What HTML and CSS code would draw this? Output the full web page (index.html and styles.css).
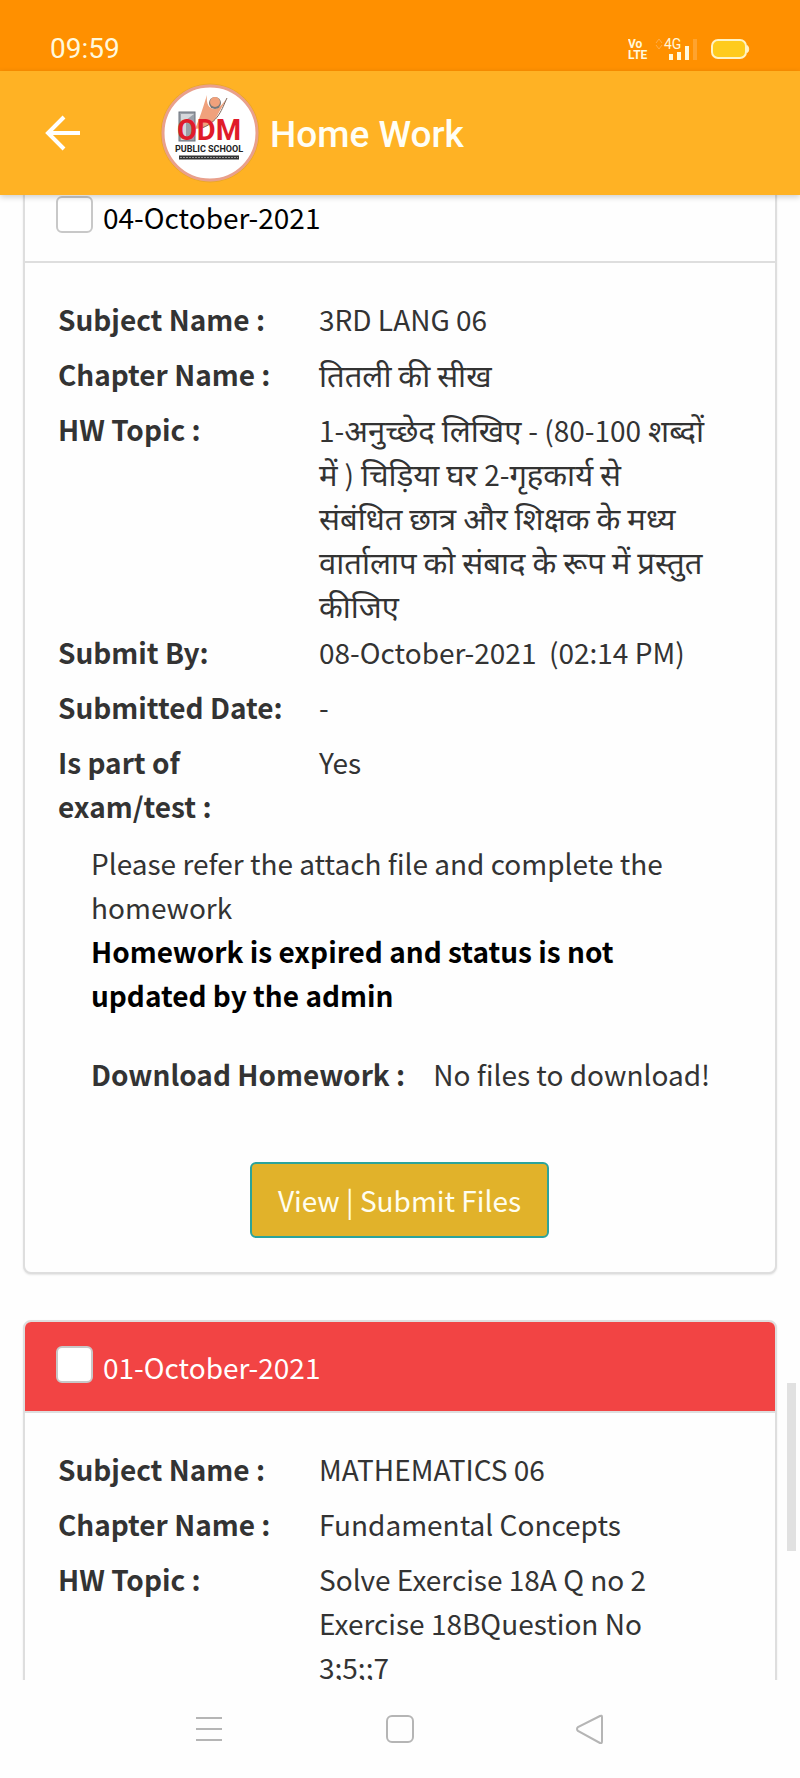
FILE: index.html
```html
<!DOCTYPE html>
<html lang="en">
<head>
<meta charset="utf-8">
<meta name="viewport" content="width=device-width, initial-scale=1">
<title>Home Work</title>
<link rel="stylesheet" href="styles.css">
</head>
<body>
<div class="app">
  <div class="status-bar">
    <span class="clock">09:59</span>
    <svg class="status-icons" width="122" height="24" viewBox="0 0 122 24" aria-hidden="true">
      <text class="volte" x="0" y="11">Vo</text>
      <text class="volte" x="0" y="22">LTE</text>
      <path d="M28 6l3-4 3 4M28 8l3 4 3-4" fill="none" stroke="#ffad4a" stroke-width="1"/>
      <text class="network" x="36" y="12">4G</text>
      <path d="M43 17v6M51 15v8M59 9v14" stroke="#fff8dc" stroke-width="4"/>
      <path d="M67 2v21" stroke="#ffa32e" stroke-width="4"/>
      <rect x="84" y="3" width="34" height="18" rx="6" fill="#ffcb1c" stroke="#fff3c4" stroke-width="2"/>
      <path d="M119 8.500c2 1 2.500 6 0 7z" fill="#fff3c4" stroke="#fff3c4"/>
    </svg>
  </div>

  <header class="app-bar">
    <button class="back" type="button" aria-label="Back">
      <svg width="36" height="36" viewBox="0 0 36 36"><path d="M36 18H4M20 2L4 18l16 16" fill="none" stroke="#fff" stroke-width="4"/></svg>
    </button>
    <svg class="logo" width="100" height="100" viewBox="0 0 100 100" role="img" aria-label="ODM Public School">
      <circle cx="50" cy="50" r="49" fill="none" stroke="#e9a727" stroke-width="1"/>
      <circle cx="50" cy="50" r="47" fill="#fff" stroke="#e9a08c" stroke-width="3"/>
      <rect x="19" y="29" width="16" height="29" fill="#9aa0a8" stroke="#6c737c" stroke-width="1"/>
      <path d="M21 31h13l-8 6v20h-5z" fill="#d4d7db"/>
      <path d="M47 12C44 21 42 28 39 36L35 46c10-1 18-5 22-13 3-6 7-12 10-18-4 6-8 10-12 11-6 0-9-5-8-14z" fill="#f0a17c"/>
      <path d="M67 15c-5 10-8 25-28 31" fill="none" stroke="#7d6558" stroke-width="1"/>
      <circle cx="55" cy="20" r="6" fill="#777"/>
      <circle cx="55" cy="19" r="5" fill="#f0a17c"/>
      <text class="logo-name" x="49" y="57">ODM</text>
      <text class="logo-sub" x="49" y="69">PUBLIC SCHOOL</text>
      <path d="M19 74.500h60" stroke="#333" stroke-width="4"/>
      <path d="M20 74.500h58" stroke="#999" stroke-width="1" stroke-dasharray="2 1"/>
    </svg>
    <h1 class="title">Home Work</h1>
  </header>

  <main class="feed">
    <article class="card card-first">
      <label class="card-head">
        <input class="tick" type="checkbox">
        <span>04-October-2021</span>
      </label>
      <div class="card-body">
        <dl class="facts">
          <div class="fact"><dt>Subject Name :</dt><dd>3RD LANG 06</dd></div>
          <div class="fact"><dt>Chapter Name :</dt><dd lang="hi">तितली की सीख</dd></div>
          <div class="fact fact-topic"><dt>HW Topic :</dt><dd lang="hi"><span class="latin">1-</span>अनुच्छेद लिखिए <span class="latin">- (80-100</span> शब्दों में <span class="latin">)</span> चिड़िया घर <span class="latin">2-</span>गृहकार्य से संबंधित छात्र और शिक्षक के मध्य वार्तालाप को संबाद के रूप में प्रस्तुत कीजिए</dd></div>
          <div class="fact"><dt>Submit By:</dt><dd>08-October-2021&nbsp; (02:14 PM)</dd></div>
          <div class="fact"><dt>Submitted Date:</dt><dd>-</dd></div>
          <div class="fact"><dt>Is part of exam/test :</dt><dd>Yes</dd></div>
        </dl>
        <div class="note">
          <p>Please refer the attach file and complete the homework</p>
          <p class="expired">Homework is expired and status is not updated by the admin</p>
          <p class="download"><strong>Download Homework :</strong><span>No files to download!</span></p>
        </div>
        <div class="actions"><button class="submit" type="button">View | Submit Files</button></div>
      </div>
    </article>

    <article class="card">
      <label class="card-head card-head-late">
        <input class="tick" type="checkbox">
        <span>01-October-2021</span>
      </label>
      <div class="card-body">
        <dl class="facts">
          <div class="fact"><dt>Subject Name :</dt><dd>MATHEMATICS 06</dd></div>
          <div class="fact"><dt>Chapter Name :</dt><dd>Fundamental Concepts</dd></div>
          <div class="fact"><dt>HW Topic :</dt><dd>Solve Exercise 18A Q no 2 Exercise 18BQuestion No 3;5;;7</dd></div>
        </dl>
      </div>
    </article>
    <div class="scroll-thumb"></div>
  </main>

  <nav class="system-nav">
    <button type="button" aria-label="Recent apps"><svg width="30" height="30" viewBox="0 0 30 30"><path d="M2 4h26M2 15h26M2 26h26"/></svg></button>
    <button type="button" aria-label="Home"><svg width="30" height="30" viewBox="0 0 30 30"><rect x="2" y="2" width="26" height="26" rx="5"/></svg></button>
    <button type="button" aria-label="Back"><svg width="30" height="30" viewBox="0 0 30 30"><path d="M24 2L2 13q-2 2 0 4l22 12q2 1 2-2V3q0-2-2-1z"/></svg></button>
  </nav>
</div>
</body>
</html>
```

FILE: styles.css
```css
* {
  box-sizing: border-box;
}

body {
  margin: 0;
  background: #fefefe;
  color: #333;
  font-family: "Noto Sans CJK SC", "Noto Sans", sans-serif;
  font-size: 28px;
  line-height: 44px;
}

button {
  padding: 0;
  border: 0;
  background: none;
  color: inherit;
  font: inherit;
}

svg {
  display: block;
}

.app {
  display: flex;
  flex-direction: column;
  height: 100vh;
}

.status-bar {
  display: flex;
  flex: none;
  align-items: flex-end;
  justify-content: space-between;
  height: 71px;
  padding: 0 50px 10px;
  background: #ff9000;
  color: #fff8dc;
}

.clock {
  font-family: Roboto, sans-serif;
  font-size: 28px;
  line-height: 24px;
}

.volte {
  fill: #fff8dc;
  font: bold 12px Roboto, sans-serif;
}

.network {
  fill: #fff8dc;
  font: 14px Roboto, sans-serif;
}

.app-bar {
  position: relative;
  z-index: 1;
  display: flex;
  flex: none;
  align-items: center;
  height: 124px;
  padding: 0 44px;
  background: #ffb224;
  box-shadow: 0 2px 6px rgba(0, 0, 0, 0.2);
}

.logo {
  margin: 0 10px 0 80px;
}

.logo-name {
  fill: #e01b2a;
  font: bold 29px Roboto, sans-serif;
  text-anchor: middle;
}

.logo-sub {
  fill: #222;
  font: bold 9px Roboto, sans-serif;
  text-anchor: middle;
}

.title {
  margin: 0;
  padding-top: 4px;
  color: #fffef5;
  font-family: Roboto, sans-serif;
  font-size: 37px;
  font-weight: 500;
}

.feed {
  position: relative;
  flex: 1;
  min-height: 0;
  padding: 0 23px;
  overflow: hidden;
}

.card {
  margin-bottom: 46px;
  border: 2px solid #dedede;
  border-radius: 8px;
  background: #fefefe;
  box-shadow: 0 1px 2px rgba(0, 0, 0, 0.1);
}

/* The feed opens scrolled a little way into the first card. */
.card-first {
  margin-top: -25px;
}

.card-head {
  display: flex;
  align-items: center;
  gap: 10px;
  height: 91px;
  padding: 0 31px;
  border-bottom: 2px solid #dedede;
  color: #000;
}

.card-head-late {
  border-radius: 6px 6px 0 0;
  background: #f24444;
  color: #fff;
}

.tick {
  width: 37px;
  height: 37px;
  margin: 0 0 4px;
  border: 2px solid #c8c8c8;
  border-radius: 6px;
  background: #fff;
  appearance: none;
}

.card-body {
  padding: 34px 34px 34px 33px;
}

.facts {
  display: grid;
  gap: 11px;
  margin: 0;
}

.fact {
  display: grid;
  grid-template-columns: 261px 1fr;
}

.fact dt {
  padding-right: 32px;
  font-weight: 700;
}

.fact dd {
  margin: 0;
  padding-right: 34px;
}

.fact-topic {
  margin-bottom: -8px;
}

[lang="hi"] {
  font-size: 31px;
}

.latin {
  font-size: 28px;
  line-height: 1;
}

.note {
  padding: 13px 30px 0 33px;
}

.note p {
  margin: 0;
}

.note .expired {
  color: #000;
  font-weight: 700;
}

.note .download {
  display: flex;
  flex-wrap: wrap;
  column-gap: 28px;
  margin-top: 35px;
}

.actions {
  display: flex;
  justify-content: center;
  margin-top: 66px;
}

.submit {
  padding: 14px 26px;
  border: 2px solid #2ba39b;
  border-radius: 6px;
  background: #e1b22a;
  color: #fffef0;
}

.scroll-thumb {
  position: absolute;
  top: 80%;
  right: 4px;
  width: 9px;
  height: 168px;
  background: #e1e1e1;
}

.system-nav {
  display: grid;
  flex: none;
  grid-template-columns: repeat(3, 1fr);
  place-items: center;
  height: 98px;
  padding: 0 114px;
  background: #fefefe;
}

.system-nav svg {
  fill: none;
  stroke: #b5b5b5;
  stroke-width: 2;
}
```
